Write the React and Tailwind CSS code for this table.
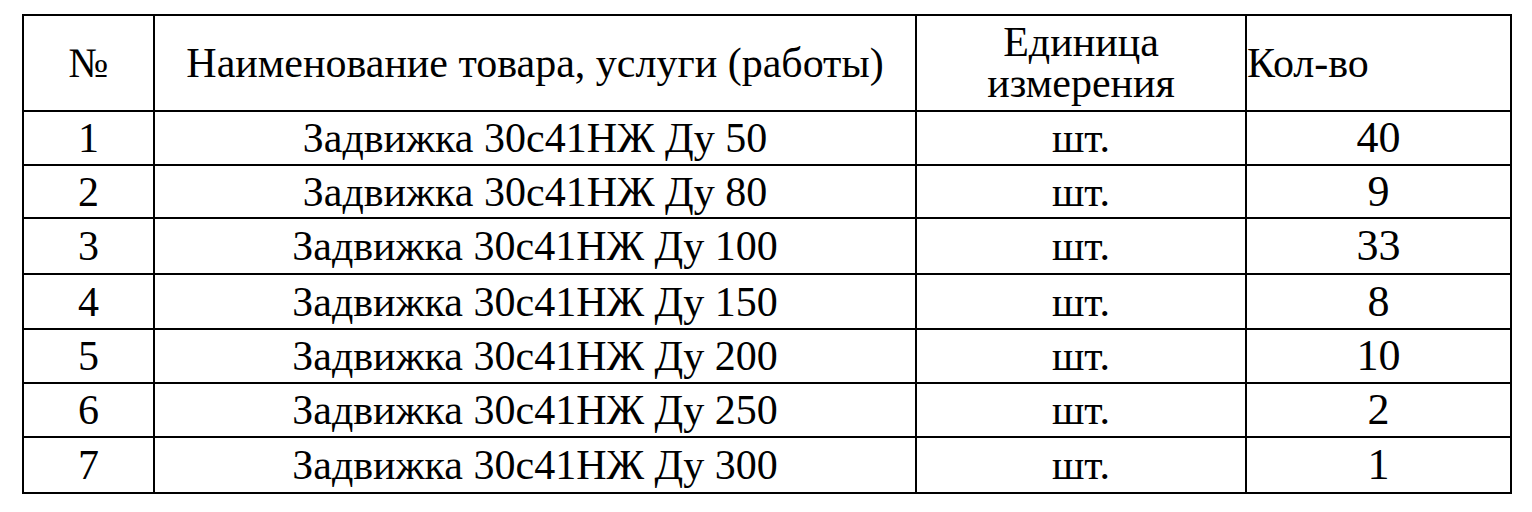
const ROWS = [
  { n: 1, name: 'Задвижка 30с41НЖ Ду 50', qty: 40, h: 'h-[54px]' },
  { n: 2, name: 'Задвижка 30с41НЖ Ду 80', qty: 9, h: 'h-[53px]' },
  { n: 3, name: 'Задвижка 30с41НЖ Ду 100', qty: 33, h: 'h-[56px]' },
  { n: 4, name: 'Задвижка 30с41НЖ Ду 150', qty: 8, h: 'h-[55px]' },
  { n: 5, name: 'Задвижка 30с41НЖ Ду 200', qty: 10, h: 'h-[54px]' },
  { n: 6, name: 'Задвижка 30с41НЖ Ду 250', qty: 2, h: 'h-[54px]' },
  { n: 7, name: 'Задвижка 30с41НЖ Ду 300', qty: 1, h: 'h-[56px]' },
]

export default function App() {
  return (
    <div className="w-[1532px] h-[512px] bg-white pt-[14px] pl-[22px] text-black font-['Liberation_Serif',serif]">
      <table className="table-fixed border-collapse w-[1488px] text-[42px] leading-none">
        <colgroup>
          <col className="w-[131px]" />
          <col className="w-[762px]" />
          <col className="w-[330px]" />
          <col className="w-[265px]" />
        </colgroup>
        <thead>
          <tr className="h-[96px]">
            <th className="border-2 border-black font-normal text-center">№</th>
            <th className="border-2 border-black font-normal text-center">Наименование товара, услуги (работы)</th>
            <th className="border-2 border-black font-normal text-center leading-[41px]">
              Единица
              <br />
              измерения
            </th>
            <th className="border-2 border-black font-normal text-left">Кол-во</th>
          </tr>
        </thead>
        <tbody>
          {ROWS.map((r) => (
            <tr key={r.n} className={r.h}>
              <td className="border-2 border-black text-center">{r.n}</td>
              <td className="border-2 border-black text-center">{r.name}</td>
              <td className="border-2 border-black text-center">шт.</td>
              <td className="border-2 border-black text-center text-[44px]">{r.qty}</td>
            </tr>
          ))}
        </tbody>
      </table>
    </div>
  )
}
